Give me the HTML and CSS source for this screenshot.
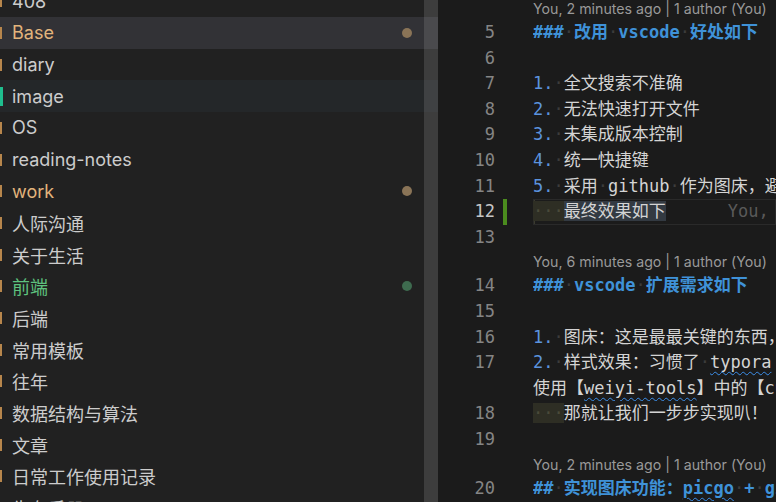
FILE: index.html
```html
<!DOCTYPE html>
<html>
<head>
<meta charset="utf-8">
<link rel="stylesheet" href="styles.css">
</head>
<body>
<div class="sidebar">
  <div class="list">
    <div class="row first"><span class="deco"></span><span class="name">408</span></div>
    <div class="row sel mod"><span class="deco"></span><span class="name">Base</span><span class="dot"></span></div>
    <div class="row"><span class="deco"></span><span class="name">diary</span></div>
    <div class="row hov"><span class="deco green"></span><span class="name">image</span></div>
    <div class="row"><span class="deco"></span><span class="name">OS</span></div>
    <div class="row"><span class="deco"></span><span class="name">reading-notes</span></div>
    <div class="row mod"><span class="deco"></span><span class="name">work</span><span class="dot"></span></div>
    <div class="row"><span class="deco"></span><span class="name">人际沟通</span></div>
    <div class="row"><span class="deco"></span><span class="name">关于生活</span></div>
    <div class="row add"><span class="deco"></span><span class="name">前端</span><span class="dot"></span></div>
    <div class="row"><span class="deco"></span><span class="name">后端</span></div>
    <div class="row"><span class="deco"></span><span class="name">常用模板</span></div>
    <div class="row"><span class="deco"></span><span class="name">往年</span></div>
    <div class="row"><span class="deco"></span><span class="name">数据结构与算法</span></div>
    <div class="row"><span class="deco"></span><span class="name">文章</span></div>
    <div class="row"><span class="deco"></span><span class="name">日常工作使用记录</span></div>
    <div class="row"><span class="deco"></span><span class="name">生存手册</span></div>
  </div>
  <div class="scrollbar"></div>
</div>
<div class="editor">
  <div class="lens first">You, 2 minutes ago | 1 author (You)</div>
  <div class="line"><span class="ln">5</span><span class="gm"></span><span class="code h">###<span class="ws">·</span>改用<span class="ws">·</span>vscode<span class="ws">·</span>好处如下</span></div>
  <div class="line"><span class="ln">6</span><span class="gm"></span><span class="code"></span></div>
  <div class="line"><span class="ln">7</span><span class="gm"></span><span class="code"><span class="num">1.</span><span class="ws">·</span>全文搜索不准确</span></div>
  <div class="line"><span class="ln">8</span><span class="gm"></span><span class="code"><span class="num">2.</span><span class="ws">·</span>无法快速打开文件</span></div>
  <div class="line"><span class="ln">9</span><span class="gm"></span><span class="code"><span class="num">3.</span><span class="ws">·</span>未集成版本控制</span></div>
  <div class="line"><span class="ln">10</span><span class="gm"></span><span class="code"><span class="num">4.</span><span class="ws">·</span>统一快捷键</span></div>
  <div class="line"><span class="ln">11</span><span class="gm"></span><span class="code"><span class="num">5.</span><span class="ws">·</span>采用<span class="ws">·</span>github<span class="ws">·</span>作为图床，避免图片丢失</span></div>
  <div class="line cur"><span class="ln">12</span><span class="gm on"></span><span class="code"><span class="indent">···</span><span class="selected">最终效果如下</span><span class="blame">You, 2 minutes ago • Uncommitted changes</span></span></div>
  <div class="line"><span class="ln">13</span><span class="gm"></span><span class="code"></span></div>
  <div class="lens">You, 6 minutes ago | 1 author (You)</div>
  <div class="line"><span class="ln">14</span><span class="gm"></span><span class="code h">###<span class="ws">·</span>vscode<span class="ws">·</span>扩展需求如下</span></div>
  <div class="line"><span class="ln">15</span><span class="gm"></span><span class="code"></span></div>
  <div class="line"><span class="ln">16</span><span class="gm"></span><span class="code"><span class="num">1.</span><span class="ws">·</span>图床：这是最最关键的东西，</span></div>
  <div class="line"><span class="ln">17</span><span class="gm"></span><span class="code"><span class="num">2.</span><span class="ws">·</span>样式效果：习惯了<span class="ws">·</span><span class="sq">typora</span></span></div>
  <div class="line"><span class="ln"></span><span class="gm"></span><span class="code">使用【<span class="sq">weiyi-tools</span>】中的【custom】</span></div>
  <div class="line"><span class="ln">18</span><span class="gm"></span><span class="code"><span class="indent">···</span>那就让我们一步步实现叭！</span></div>
  <div class="line"><span class="ln">19</span><span class="gm"></span><span class="code"></span></div>
  <div class="lens">You, 2 minutes ago | 1 author (You)</div>
  <div class="line"><span class="ln">20</span><span class="gm"></span><span class="code h">##<span class="ws">·</span>实现图床功能：<span class="sq">picgo</span><span class="ws">·</span>+<span class="ws">·</span>github</span></div>
</div>
</body>
</html>
```

FILE: styles.css
```css
html, body {
  margin: 0;
  padding: 0;
  height: 502px;
  overflow: hidden;
  background: #1b1b1b;
}
body {
  display: flex;
}
.sidebar {
  position: relative;
  width: 438px;
  flex: none;
  background: #212121;
  height: 502px;
  overflow: hidden;
}
.list {
  display: flex;
  flex-direction: column;
}
.row {
  display: flex;
  align-items: center;
  height: 31.7px;
  flex: none;
  padding-right: 26px;
  font-family: "Inter", "Noto Sans CJK SC", sans-serif;
  font-size: 18px;
  color: #cccccc;
}
.row.first {
  margin-top: -14.7px;
}
.row.sel {
  background: #323236;
}
.row.hov {
  background: #242729;
}
.deco {
  width: 2px;
  height: 12px;
  background: #b7864c;
  margin-right: 10px;
  flex: none;
}
.deco.green {
  width: 3px;
  height: 19px;
  margin-right: 9px;
  background: #1fbf8f;
}
.name {
  flex: 1;
  white-space: nowrap;
}
.mod .name {
  color: #e2b47c;
}
.add .name {
  color: #5ec27e;
}
.dot {
  width: 10px;
  height: 10px;
  border-radius: 50%;
  background: #8a7457;
  flex: none;
}
.add .dot {
  background: #3e6b4f;
}
.scrollbar {
  position: absolute;
  top: 0;
  right: 0;
  width: 14px;
  height: 100%;
  background: rgba(152, 152, 152, 0.235);
}
.editor {
  flex: 1;
  min-width: 0;
  background: #1b1b1b;
  overflow: hidden;
  display: flex;
  flex-direction: column;
}
.lens {
  height: 23px;
  line-height: 23px;
  flex: none;
  padding-left: 95px;
  font-family: "Inter", sans-serif;
  font-size: 14.2px;
  color: #999999;
  white-space: nowrap;
}
.lens.first {
  margin-top: -3px;
}
.line {
  display: flex;
  height: 25.6px;
  line-height: 25.6px;
  flex: none;
  font-family: "DejaVu Sans Mono", "Noto Sans CJK SC", monospace;
  font-size: 17px;
  white-space: nowrap;
}
.ln {
  width: 57px;
  text-align: right;
  color: #858585;
  flex: none;
}
.cur .ln {
  color: #c6c6c6;
}
.gm {
  width: 4px;
  margin-left: 8px;
  margin-right: 26px;
  flex: none;
}
.gm.on {
  background: #4b8c1e;
}
.code {
  flex: 1;
  color: #d4d4d4;
  overflow: hidden;
}
.cur .code {
  box-shadow: inset 0 0 0 1px #2a2a2a, inset 2px 0 0 #3b3b2e;
}
.code.h {
  color: #3f92d8;
  font-weight: bold;
}
.num {
  color: #5b93de;
}
.ws {
  color: #3c3c3c;
  font-weight: normal;
}
.indent {
  color: #4a4a3a;
  background: #2e2e24;
}
.selected {
  background: #333a42;
}
.blame {
  color: #595959;
  margin-left: 62px;
}
.sq {
  text-decoration: underline wavy #3b8eea;
  text-decoration-thickness: 1px;
  text-underline-offset: 3px;
}
```
